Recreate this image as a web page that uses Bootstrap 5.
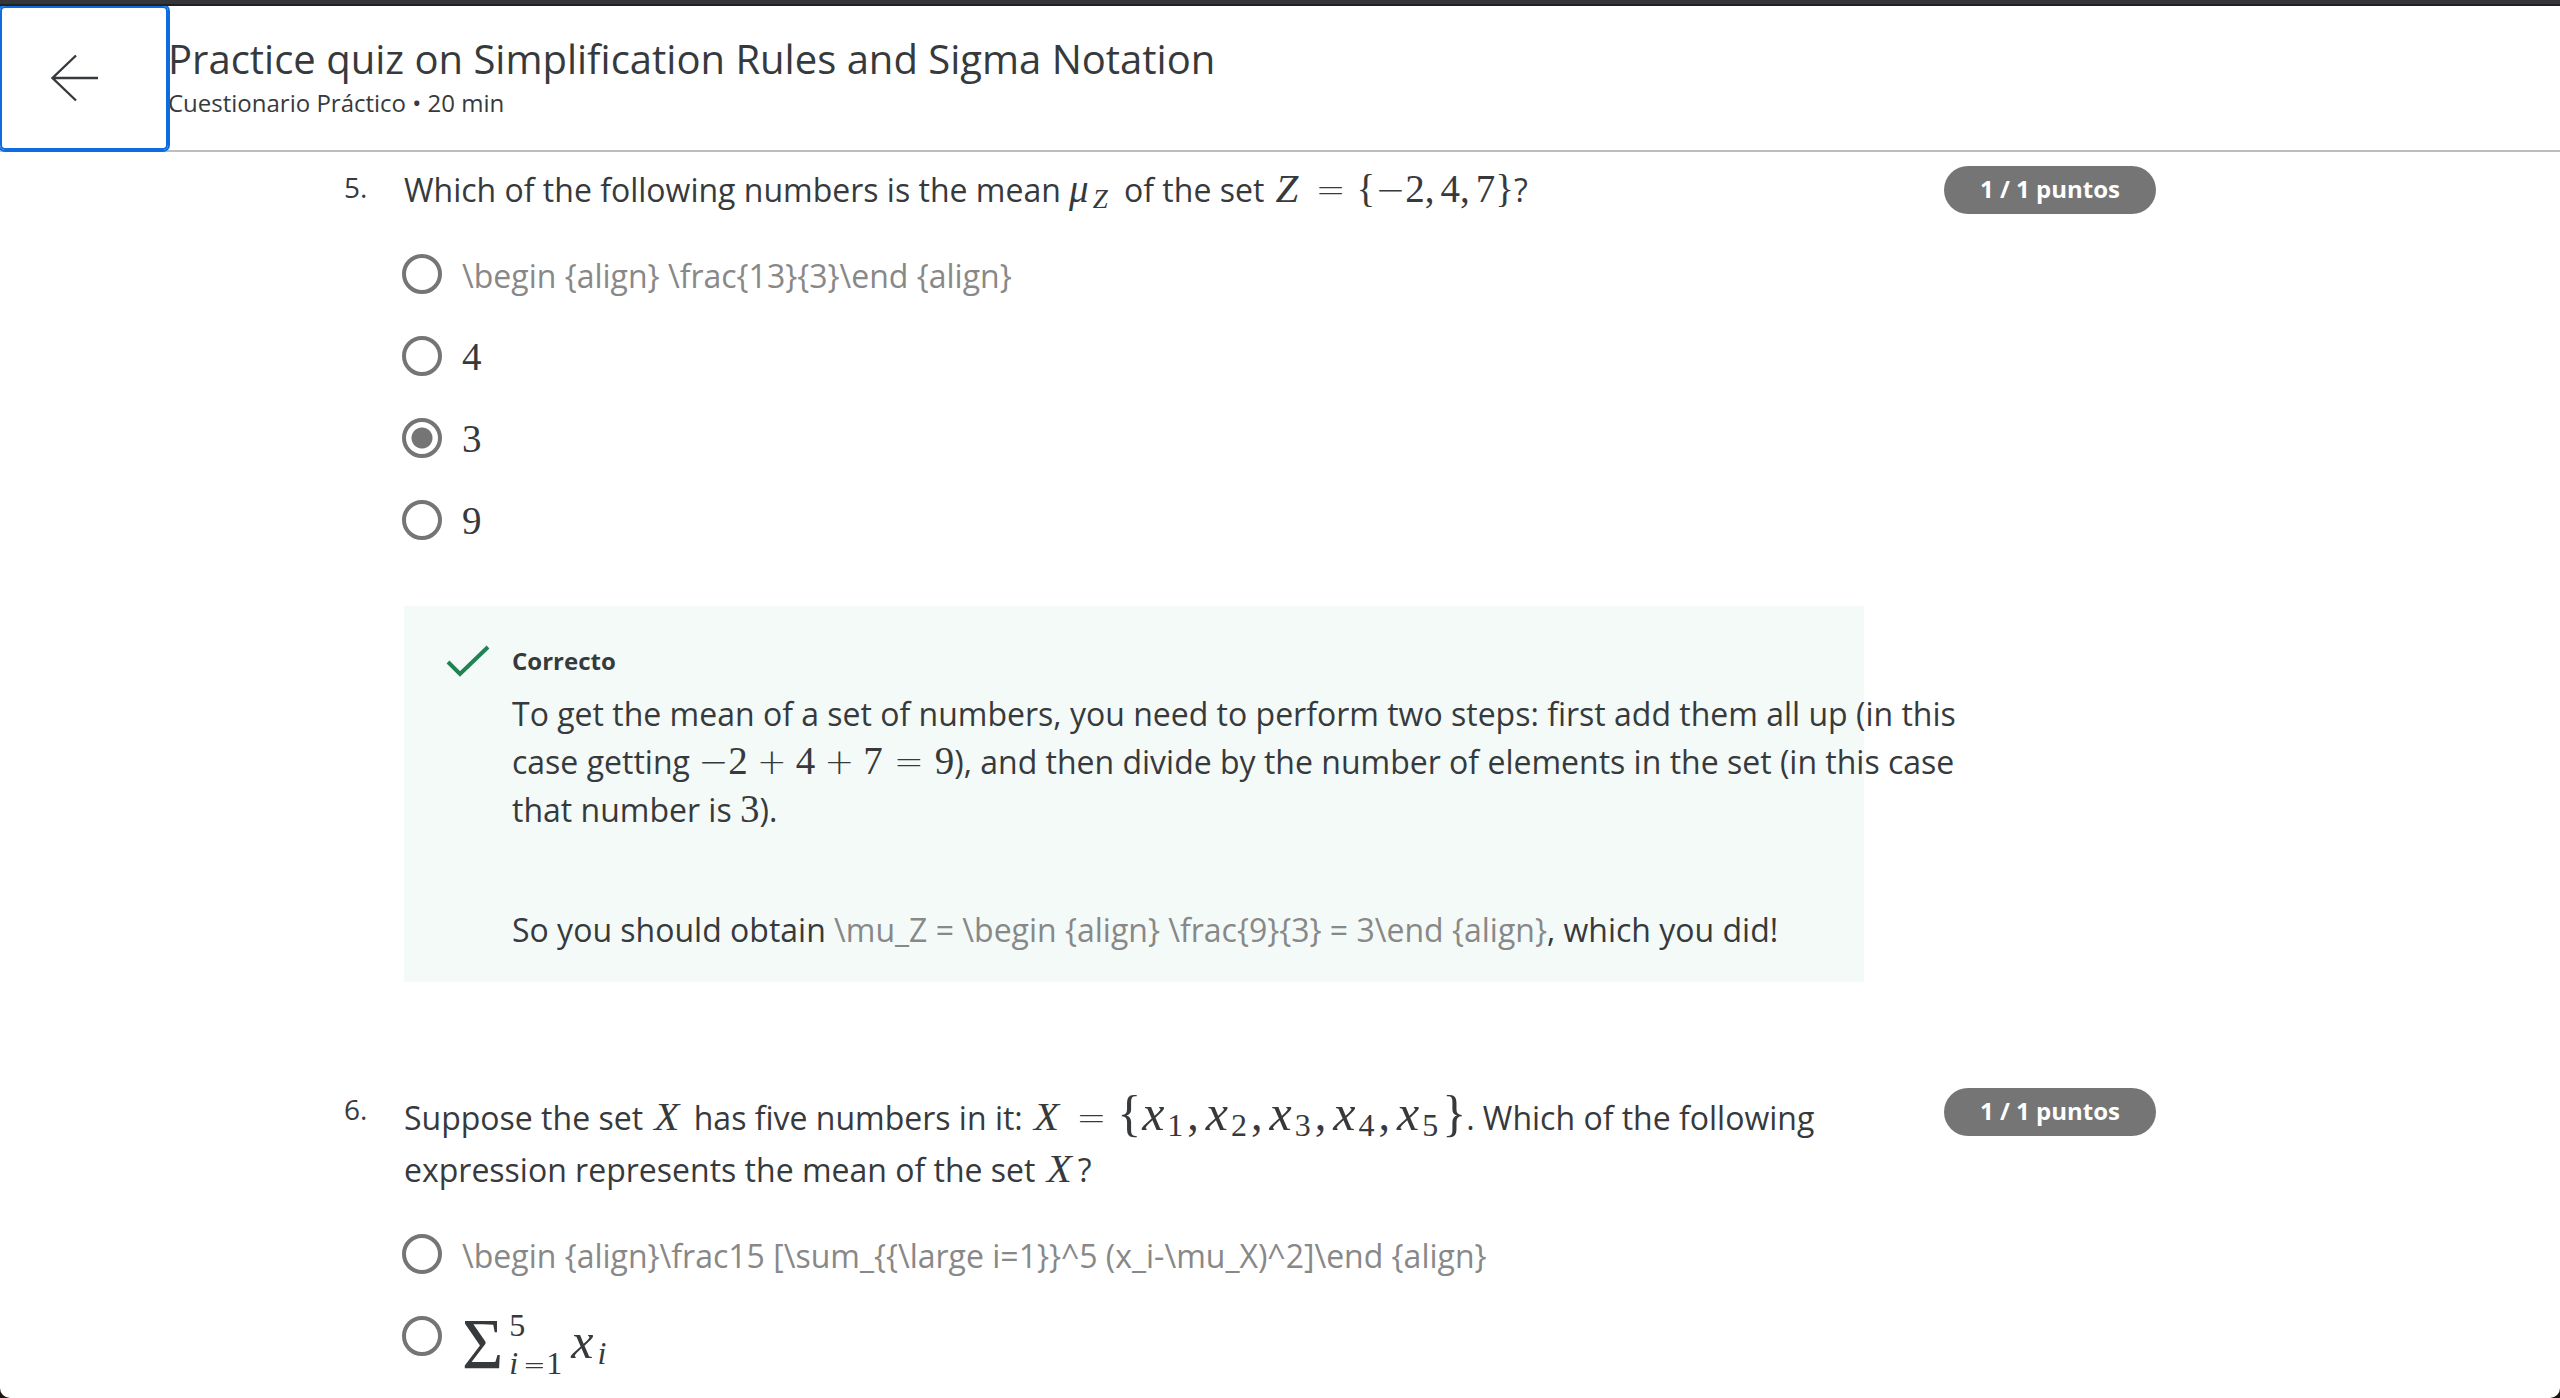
<!DOCTYPE html>
<html lang="es">
<head>
<meta charset="utf-8">
<meta name="viewport" content="width=device-width, initial-scale=1">
<title>Practice quiz on Simplification Rules and Sigma Notation</title>
<link rel="stylesheet" href="https://cdn.jsdelivr.net/npm/bootstrap@5.3.0/dist/css/bootstrap.min.css">
<style>
  body { background: #1d1513; color: #373a3c; font: 32px/48px "Open Sans", sans-serif; }
  .shell { border-radius: 0 0 10px 10px; }
  .window-edge { height: 6px; background: #343639; border-bottom: 2px solid #202121; z-index: 2; }
  .quiz-head { border-bottom: 2px solid #bdbdbd; }
  .back-btn { width: 168px; height: 144px; padding: 0 18px 2px 0; border: 0; border-radius: 5px; background: #fff; color: #373a3c; z-index: 1;
    box-shadow: 0 0 0 2px #0f6cdf, inset 0 0 0 2px #0f6cdf; }
  .quiz-title { font-size: 40px; line-height: 48px; font-weight: 400; margin: 29px 0 0; }
  .quiz-meta { font-size: 24px; line-height: 40px; margin: 0; }
  .quiz-body { max-width: 1872px; padding: 14px 60px 16px 0; }
  .q-num { flex: 0 0 60px; font-size: 28px; line-height: 42px; }
  .q-main { min-width: 0; margin-right: 80px; }
  .question + .question { margin-top: 106px; }
  .stem { margin: 0 0 38px; font-size: inherit; font-weight: 400; line-height: 48px; }
  .stem-tall { line-height: 52px; padding-top: 4px; margin-bottom: 36px; }
  .points { flex: 0 0 212px; height: 48px; line-height: 46px; padding: 0; font-size: 24px; font-weight: 700; background: #757575; }
  .options { gap: 34px; }
  .option { gap: 20px; }
  .option .form-check-input { flex: none; width: 40px; height: 40px; margin: 2px 0 0 -2px; border: 4px solid #757575; background: none; }
  .option .form-check-input:checked { background-image: radial-gradient(circle, #757575 10px, #fff 11px); background-origin: padding-box; }
  .raw { color: #888; }
  .feedback { margin-top: 60px; padding: 28px 0; background: #f4faf8; }
  .feedback-icon { flex: 0 0 108px; padding: 11px 0 0 42px; line-height: 0; }
  .feedback-text { flex: 0 0 100%; }
  .feedback-text h3 { font-size: 24px; line-height: 54px; font-weight: 700; margin: 0 0 2px; }
  .feedback-text p { margin: 0; }
  .feedback-text p + p { margin-top: 72px; }

  /* inline formulas */
  .tex { font-family: "Liberation Serif", serif; font-size: 39px; line-height: 40px; white-space: nowrap; }
  .tex i { padding-right: 4px; }
  .tex .cap { font-size: 41px; padding: 0 6px 0 3px; }
  .tex .rel, .tex .bin, .tex .neg { display: inline-block; font-family: "DejaVu Sans", sans-serif; font-weight: 200; font-size: 36px; line-height: 36px; text-align: center; width: 30px; }
  .tex .rel { margin: 0 11px; }
  .tex .bin { margin: 0 9px; }
  .tex .sep { padding-right: 6px; }
  .tex .low { font-size: 27px; line-height: 28px; vertical-align: -6px; }
  .tex .big { font-size: 46px; }
  .tex .big .low { font-size: 32px; padding-right: 4px; }
  .tex .big i { font-size: 50px; padding: 0 3px 0 1px; }
  .tex .fence { font-size: 50px; }
  .sum-row { height: 60px; }
  .sum-sign { font-size: 71px; line-height: 64px; margin-right: 6px; }
  .limits { font-size: 32px; height: 70px; }
  .limits span { line-height: 32px; }
  .limits .rel { width: 24px; margin: 0; font-size: 27px; line-height: 27px; }
</style>
<script src="https://cdn.jsdelivr.net/npm/bootstrap@5.3.0/dist/js/bootstrap.bundle.min.js"></script>
</head>
<body>
<div class="shell vh-100 d-flex flex-column bg-white overflow-hidden">
  <div class="window-edge flex-shrink-0 position-relative"></div>
  <header class="quiz-head d-flex flex-shrink-0">
    <button type="button" class="back-btn position-relative flex-shrink-0" aria-label="Volver">
      <svg width="50" height="50" viewBox="0 0 50 50" fill="none" stroke="currentColor" stroke-width="2.4"><path d="M48 25H2M26 2.500 2.500 25 26 47.500"/></svg>
    </button>
    <div>
      <h1 class="quiz-title">Practice quiz on Simplification Rules and Sigma Notation</h1>
      <p class="quiz-meta">Cuestionario Práctico • 20 min</p>
    </div>
  </header>

  <main class="flex-grow-1 overflow-auto">
    <div class="quiz-body container-fluid">

      <section class="question d-flex align-items-start">
        <div class="q-num">5.</div>
        <div class="q-main flex-grow-1">
          <h2 class="stem" id="q5">Which of the following numbers is the mean <span class="tex"><i>μ</i><i class="low pe-2">Z</i></span> of the set <span class="tex"><i class="cap">Z</i><span class="rel">=</span>{<span class="neg">−</span>2<span class="sep">,</span>4<span class="sep">,</span>7}</span>?</h2>
          <div class="options d-flex flex-column" role="radiogroup" aria-labelledby="q5">
            <div class="option d-flex align-items-start"><input class="form-check-input" type="radio" name="q5" id="q5a"><label class="raw" for="q5a">\begin {align} \frac{13}{3}\end {align}</label></div>
            <div class="option d-flex align-items-start"><input class="form-check-input" type="radio" name="q5" id="q5b"><label for="q5b"><span class="tex">4</span></label></div>
            <div class="option d-flex align-items-start"><input class="form-check-input" type="radio" name="q5" id="q5c" checked><label for="q5c"><span class="tex">3</span></label></div>
            <div class="option d-flex align-items-start"><input class="form-check-input" type="radio" name="q5" id="q5d"><label for="q5d"><span class="tex">9</span></label></div>
          </div>
          <div class="feedback d-flex">
            <div class="feedback-icon">
              <svg width="44" height="32" viewBox="0 0 44 32" fill="none" stroke="#1f8354" stroke-width="4"><path d="M2 17 14 29 42 2"/></svg>
            </div>
            <div class="feedback-text">
              <h3>Correcto</h3>
              <p>To get the mean of a set of numbers, you need to perform two steps: first add them all up (in this case getting <span class="tex"><span class="neg">−</span>2<span class="bin">+</span>4<span class="bin">+</span>7<span class="rel">=</span>9</span>), and then divide by the number of elements in the set (in this case that number is <span class="tex">3</span>).</p>
              <p>So you should obtain <span class="raw">\mu_Z = \begin {align} \frac{9}{3} = 3\end {align}</span>, which you did!</p>
            </div>
          </div>
        </div>
        <span class="points badge rounded-pill">1 / 1 puntos</span>
      </section>

      <section class="question d-flex align-items-start">
        <div class="q-num">6.</div>
        <div class="q-main flex-grow-1">
          <h2 class="stem stem-tall" id="q6">Suppose the set <span class="tex"><i class="cap">X</i></span> has five numbers in it: <span class="tex"><i class="cap">X</i><span class="rel">=</span><span class="fence">{</span><span class="big"><i>x</i><span class="low">1</span><span class="sep">,</span><i>x</i><span class="low">2</span><span class="sep">,</span><i>x</i><span class="low">3</span><span class="sep">,</span><i>x</i><span class="low">4</span><span class="sep">,</span><i>x</i><span class="low">5</span></span><span class="fence">}</span></span>. Which of the following expression represents the mean of the set <span class="tex"><i class="cap">X</i></span>?</h2>
          <div class="options d-flex flex-column" role="radiogroup" aria-labelledby="q6">
            <div class="option d-flex align-items-start"><input class="form-check-input" type="radio" name="q6" id="q6a"><label class="raw" for="q6a">\begin {align}\frac15 [\sum_{{\large i=1}}^5 (x_i-\mu_X)^2]\end {align}</label></div>
            <div class="option d-flex align-items-start"><input class="form-check-input" type="radio" name="q6" id="q6b"><label class="tex sum-row d-flex align-items-center" for="q6b"><span class="sum-sign">Σ</span><span class="limits d-flex flex-column justify-content-between"><span>5</span><span><i>i</i><span class="rel">=</span>1</span></span><span class="big ms-2"><i>x</i><i class="low">i</i></span></label></div>
          </div>
        </div>
        <span class="points badge rounded-pill">1 / 1 puntos</span>
      </section>

    </div>
  </main>
</div>
</body>
</html>
